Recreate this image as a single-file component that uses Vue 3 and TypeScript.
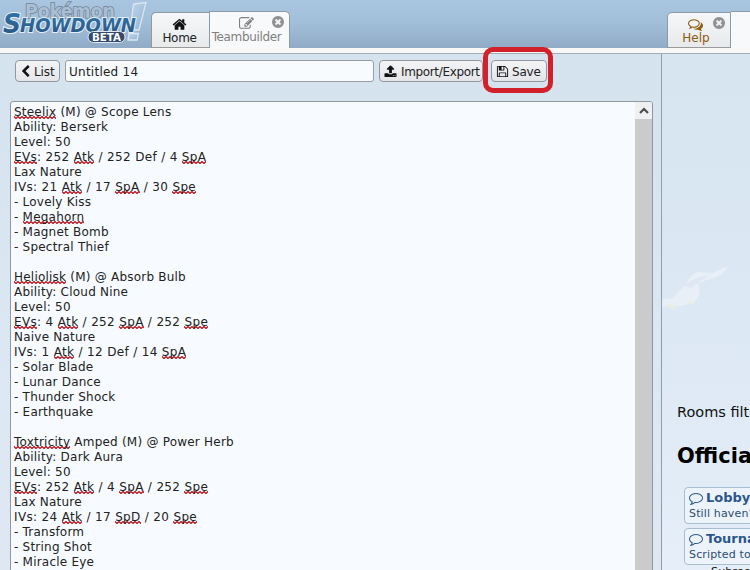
<script setup lang="ts">
const icons = {
  home: 'M1472 992v480q0 26-19 45t-45 19h-384v-384h-256v384h-384q-26 0-45-19t-19-45v-480q0-1 .5-3t.5-3l575-474 575 474q1 2 1 6zm223-69l-62 74q-8 9-21 11h-3q-13 0-21-7l-692-577-692 577q-12 8-24 7-13-2-21-11l-62-74q-8-10-7-23.5t11-21.5l719-599q32-26 76-26t76 26l244 204v-195q0-14 9-23t23-9h192q14 0 23 9t9 23v408l219 182q10 8 11 21.5t-7 23.5z',
  edit: 'M888 1184l116-116-152-152-116 116v56h96v96h56zm440-720q-16-16-33 1l-350 350q-17 17-1 33t33-1l350-350q17-17 1-33zm80 594v190q0 119-84.5 203.5t-203.5 84.5h-832q-119 0-203.5-84.5t-84.5-203.5v-832q0-119 84.5-203.5t203.5-84.5h832q63 0 117 25 15 7 18 23 3 17-9 29l-49 49q-14 14-32 8-23-6-45-6h-832q-66 0-113 47t-47 113v832q0 66 47 113t113 47h832q66 0 113-47t47-113v-126q0-13 9-22l64-64q15-15 35-7t20 29zm-96-738l288 288-672 672h-288v-288zm444 132l-92 92-288-288 92-92q28-28 68-28t68 28l152 152q28 28 28 68t-28 68z',
  close: 'M1277 1122q0-26-19-45l-181-181 181-181q19-19 19-45 0-27-19-46l-90-90q-19-19-46-19-26 0-45 19l-181 181-181-181q-19-19-45-19-27 0-46 19l-90 90q-19 19-19 46 0 26 19 45l181 181-181 181q-19 19-19 45 0 27 19 46l90 90q19 19 46 19 26 0 45-19l181-181 181 181q19 19 45 19 27 0 46-19l90-90q19-19 19-46zm387-226q0 209-103 385.5t-279.5 279.5-385.5 103-385.5-103-279.5-279.5-103-385.5 103-385.5 279.5-279.5 385.5-103 385.5 103 279.5 279.5 103 385.5z',
  upload: 'M1344 1472q0-26-19-45t-45-19-45 19-19 45 19 45 45 19 45-19 19-45zm256 0q0-26-19-45t-45-19-45 19-19 45 19 45 45 19 45-19 19-45zm128-224v320q0 40-28 68t-68 28h-1472q-40 0-68-28t-28-68v-320q0-40 28-68t68-28h427q21 56 70.5 92t110.5 36h256q61 0 110.5-36t70.5-92h427q40 0 68 28t28 68zm-325-648q-17 40-59 40h-256v448q0 26-19 45t-45 19h-256q-26 0-45-19t-19-45v-448h-256q-42 0-59-40-17-39 14-69l448-448q18-19 45-19t45 19l448 448q31 30 14 69z',
  save: 'M512 1536h768v-384h-768v384zm896 0h128v-896q0-14-10-38.5t-20-34.5l-281-281q-10-10-34-20t-39-10v416q0 40-28 68t-68 28h-576q-40 0-68-28t-28-68v-416h-128v1280h128v-416q0-40 28-68t68-28h832q40 0 68 28t28 68v416zm-384-928v-320q0-13-9.5-22.5t-22.5-9.5h-192q-13 0-22.5 9.5t-9.5 22.5v320q0 13 9.5 22.5t22.5 9.5h192q13 0 22.5-9.5t9.5-22.5zm640 32v928q0 40-28 68t-68 28h-1344q-40 0-68-28t-28-68v-1344q0-40 28-68t68-28h928q40 0 88 20t76 48l280 280q28 28 48 76t20 88z',
  comment: 'M896 384q-204 0-381.5 69.5t-282 187.5-104.5 255q0 112 71.5 213.5t201.5 175.5l87 50-27 96q-24 91-70 172 152-63 275-171l43-38 57 6q69 8 130 8 204 0 381.5-69.5t282-187.5 104.5-255-104.5-255-282-187.5-381.5-69.5zm896 512q0 174-120 321.5t-326 233-450 85.5q-70 0-145-8-198 175-460 242-49 14-114 22h-5q-15 0-27-10.5t-16-27.5v-1q-3-4-.5-12t2-10 4.5-9.5l6-9 7-8.5 8-9q7-8 31-34.5t34.5-38 31-39.5 32.5-51 27-59 26-76q-157-89-247.5-220t-90.5-281q0-174 120-321.5t326-233 450-85.5 450 85.5 326 233 120 321.5z',
  comments: 'M704 384q-153 0-286 52t-211.5 141-78.5 191q0 82 53 158t149 132l97 56-35 84q34-20 62-39l44-31 53 10q78 14 153 14 153 0 286-52t211.5-141 78.5-191-78.5-191-211.5-141-286-52zm0-128q191 0 353.5 68.5t256.5 186.5 94 257-94 257-256.5 186.5-353.5 68.5q-86 0-176-16-124 88-278 128-36 9-86 16h-3q-11 0-20.5-8t-11.5-21q-1-3-1-6.5t.5-6.5 2-6l2.5-5 3.5-5.5 4-5 4.5-5 4-4.5q5-6 23-25t26-29.5 22.5-29 25-38.5 20.5-44q-124-72-195-177t-71-224q0-139 94-257t256.5-186.5 353.5-68.5zm822 1169q10 24 20.5 44t25 38.5 22.5 29 26 29.5 23 25q1 1 4 4.5t4.5 5 4 5 3.5 5.5l2.5 5 2 6 .5 6.5-1 6.5q-3 14-13 22t-22 7q-50-7-86-16-154-40-278-128-90 16-176 16-271 0-472-132 58 4 88 4 161 0 309-45t264-129q125-92 192-212t67-254q0-77-23-152 129 71 204 178t75 230q0 120-71 224.5t-195 176.5z',
  back: 'M1427 301l-531 531 531 531q19 19 19 45t-19 45l-166 166q-19 19-45 19t-45-19l-742-742q-19-19-19-45t19-45l742-742q19-19 45-19t45 19l166 166q19 19 19 45t-19 45z',
}

const team = `Steelix (M) @ Scope Lens
Ability: Berserk
Level: 50
EVs: 252 Atk / 252 Def / 4 SpA
Lax Nature
IVs: 21 Atk / 17 SpA / 30 Spe
- Lovely Kiss
- Megahorn
- Magnet Bomb
- Spectral Thief

Heliolisk (M) @ Absorb Bulb
Ability: Cloud Nine
Level: 50
EVs: 4 Atk / 252 SpA / 252 Spe
Naive Nature
IVs: 1 Atk / 12 Def / 14 SpA
- Solar Blade
- Lunar Dance
- Thunder Shock
- Earthquake

Toxtricity Amped (M) @ Power Herb
Ability: Dark Aura
Level: 50
EVs: 252 Atk / 4 SpA / 252 Spe
Lax Nature
IVs: 24 Atk / 17 SpD / 20 Spe
- Transform
- String Shot
- Miracle Eye`

interface Part { text: string; bad: boolean }
interface Line { stats: boolean; parts: Part[] }

const unknown = /(\b(?:Steelix|EVs|Atk|SpA|SpD|Spe|Megahorn|Heliolisk|Toxtricity)\b)/
const lines: Line[] = team.split('\n').map((line) => ({
  stats: /^[EI]Vs/.test(line),
  parts: line.split(unknown).map((text, i) => ({ text, bad: i % 2 === 1 })).filter((p) => p.text !== ''),
}))

const rooms = [
  { name: 'Lobby', desc: 'Still haven’t decided' },
  { name: 'Tournaments', desc: 'Scripted tournaments' },
]
</script>

<template>
  <div class="page">
    <header class="header">
      <svg class="logo" width="150" height="48" viewBox="0 0 150 48">
        <defs>
          <linearGradient id="blue" x1="0" y1="0" x2="0" y2="1">
            <stop offset="0" stop-color="#2f76aa" /><stop offset="1" stop-color="#29527f" />
          </linearGradient>
          <linearGradient id="glass" x1="0" y1="0" x2="1" y2="1">
            <stop offset="0" stop-color="#c3d7ea" /><stop offset="1" stop-color="#8fb0cf" />
          </linearGradient>
        </defs>
        <path d="M133.500 4L146 2.500L139 30L130 30Z" fill="url(#glass)" stroke="#d9e6f2" stroke-width="1.300" />
        <path d="M129 33.500H138.500L137 40H128Z" fill="url(#glass)" stroke="#d9e6f2" stroke-width="1.300" />
        <text class="poke" x="25" y="17.500" textLength="90" lengthAdjust="spacingAndGlyphs">Pokémon</text>
        <g class="show" fill="url(#blue)">
          <text x="3" y="33" font-size="26" textLength="18" lengthAdjust="spacingAndGlyphs">S</text>
          <text x="20" y="32" font-size="19.500" textLength="116" lengthAdjust="spacingAndGlyphs">HOWDOWN</text>
        </g>
        <rect x="88" y="31.500" width="37" height="11" rx="5.500" fill="#34496b" stroke="#e0e9f3" />
        <text class="beta" x="92" y="41" textLength="29" lengthAdjust="spacingAndGlyphs">BETA</text>
      </svg>
      <nav class="tabs">
        <a class="tab home">
          <svg class="icon" width="15" height="15" viewBox="0 0 1792 1792"><path :d="icons.home" /></svg>
          <span>Home</span>
        </a>
        <a class="tab builder">
          <svg class="icon" width="15" height="15" viewBox="0 0 1792 1792"><path :d="icons.edit" /></svg>
          <span>Teambuilder</span>
          <svg class="close" width="14" height="14" viewBox="0 0 1792 1792"><path :d="icons.close" /></svg>
        </a>
      </nav>
      <nav class="tabs side">
        <a class="tab help">
          <svg class="icon" width="15" height="15" viewBox="0 0 1792 1792"><path :d="icons.comments" /></svg>
          <span>Help</span>
          <svg class="close" width="14" height="14" viewBox="0 0 1792 1792"><path :d="icons.close" /></svg>
        </a>
        <span class="tab blank"></span>
      </nav>
    </header>
    <div class="strip"></div>

    <main class="body">
      <section class="left">
        <div class="toolbar">
          <button class="btn list"><svg width="13" height="13" viewBox="0 0 1792 1792"><path :d="icons.back" /></svg><span>List</span></button>
          <div class="name">Untitled 14</div>
          <button class="btn import"><svg width="13" height="13" viewBox="0 0 1792 1792"><path :d="icons.upload" /></svg><span>Import/Export</span></button>
          <button class="btn save"><svg width="13" height="13" viewBox="0 0 1792 1792"><path :d="icons.save" /></svg><span>Save</span></button>
          <div class="mark"></div>
        </div>
        <div class="editor">
          <div class="text">
            <div v-for="(line, i) in lines" :key="i" class="line" :class="{ stats: line.stats }"><span v-for="(part, j) in line.parts" :key="j" :class="{ bad: part.bad }">{{ part.text }}</span></div>
          </div>
          <div class="scroll">
            <div class="arrow"><svg width="10" height="8" viewBox="0 0 10 8"><path d="M1 6L5 2L9 6" fill="none" stroke="#4d4d4d" stroke-width="2.200" /></svg></div>
          </div>
        </div>
      </section>

      <section class="right">
        <svg class="bird" width="90" height="60" viewBox="0 0 90 60">
          <path d="M0 43Q13 36 24 38L37 24Q43 13 50 11L65 12L80 5Q76 15 62 18L50 22Q54 31 48 39Q32 48 22 44L10 48L0 47Z" fill="#e9eff7" />
          <path d="M35 25Q46 16 62 14Q51 20 44 27Z" fill="#dfe8f2" />
          <path d="M20 44L27 47M41 40L46 43" stroke="#e9eee0" stroke-width="3" />
        </svg>
        <p class="filter">Rooms filter</p>
        <h2>Official chat rooms</h2>
        <a v-for="room in rooms" :key="room.name" class="room">
          <strong><svg width="14" height="14" viewBox="0 0 1792 1792"><path :d="icons.comment" /></svg>{{ room.name }}</strong>
          <small>{{ room.desc }}</small>
        </a>
        <div class="sub"><i></i>Subrooms:</div>
      </section>
    </main>
  </div>
</template>

<style>
body { overflow: hidden; }
</style>

<style scoped>
* { box-sizing: border-box; }
.page {
  width: 750px; height: 570px; overflow: hidden; display: flex; flex-direction: column;
  font-family: Verdana, "DejaVu Sans", sans-serif; font-size: 12px; color: #222;
}
.header {
  height: 48px; flex: none; display: flex; align-items: flex-end;
  background: linear-gradient(#a9c5e0, #a2bfda 45%, #91abc6);
}
.logo { flex: none; display: block; font-family: "DejaVu Sans", sans-serif; }
.poke { font-size: 19px; font-weight: bold; fill: #abbfd2; stroke: #71859b; stroke-width: 1.6px; paint-order: stroke; }
.show text { font-weight: bold; font-style: italic; stroke: #e5edf5; stroke-width: 2.2px; paint-order: stroke; }
.beta { font-size: 10px; font-weight: bold; fill: #fff; }
.tabs { display: flex; align-items: flex-end; }
.side { margin-left: auto; }
.tab {
  position: relative; height: 36px; display: flex; flex-direction: column; align-items: center;
  padding-top: 4px; border: 1px solid #8c9baa; border-bottom-color: #999;
  background: linear-gradient(#f6f7f8, #e7e9eb); line-height: 14px;
}
.tab .icon { flex: none; fill: currentColor; margin-bottom: -1px; }
.home { width: 58px; margin-left: 1px; padding-right: 2px; border-radius: 5px 0 0 0; border-right: 0; letter-spacing: -0.3px; }
.home .icon { fill: #111; }
.builder { width: 81px; height: 37px; border-radius: 0 5px 0 0; background: #f8f9fa; border-bottom: 0; color: #808080; padding-right: 6px; letter-spacing: -0.35px; }
.help { width: 64px; border-radius: 5px 0 0 0; color: #8c5c0c; padding-right: 6px; }
.help .icon { transform: translateX(-1px); }
.blank { width: 19px; height: 37px; background: #f8f9fa; border-width: 1px 0 0; }
.close { position: absolute; top: 3px; right: 4px; fill: #929292; }
.strip { height: 6px; flex: none; background: #f8f8f9; border-bottom: 1px solid #a4acb4; }
.body {
  flex: 1; min-height: 0; display: flex;
  background: linear-gradient(100deg, #d2e1ed 0, #d9e6f1 30%, #d8e6f1 100%);
}
.left {
  width: 662px; flex: none; border-right: 1px solid #909dab; padding: 6px 8px 0 10px;
  display: flex; flex-direction: column; background: linear-gradient(#d5e3ef, #dbe8f3 60%, #dfe7f3);
}
.toolbar { position: relative; height: 22px; flex: none; display: flex; padding-left: 5px; }
.btn {
  height: 22px; padding: 1px 4px 0; border: 1px solid #92979f; border-radius: 4px; color: #222;
  background: linear-gradient(#f3f4f6, #e3e5e9); display: flex; align-items: center; gap: 4px; font: inherit; white-space: nowrap;
}
.btn svg { flex: none; fill: #111; }
.list { width: 45px; margin-right: 5px; padding-left: 3px; gap: 2px; letter-spacing: -0.1px; }
.name { width: 309px; height: 22px; margin-right: 5px; padding: 1px 3px 0; border: 1px solid #9b9fa4; border-radius: 3px; background: #f8fbfe; line-height: 20px; letter-spacing: 0.25px; }
.import { width: 104px; padding-left: 4px; letter-spacing: -0.35px; }
.save { width: 56px; margin-left: 8px; gap: 3px; letter-spacing: -0.2px; }
.mark { position: absolute; left: 473px; top: -13px; width: 70px; height: 46px; border: 5px solid #d2212a; border-radius: 10px; }
.editor {
  flex: 1; min-height: 0; margin: 19px 0 -1px; width: 643px; display: flex;
  border: 1px solid #8f979f; border-radius: 3px 3px 0 0; background: #f7fbff; overflow: hidden;
}
.text { flex: 1; padding: 3px 3px 0; color: #222; }
.line { height: 15px; line-height: 15px; white-space: pre; letter-spacing: 0.22px; }
.line.stats { letter-spacing: 0.34px; }
.bad {
  display: inline-block; height: 15px;
  background: url("data:image/svg+xml,%3Csvg xmlns='http://www.w3.org/2000/svg' width='4' height='3'%3E%3Cpath d='M-1 1.500L0 .5L2 2.500L4 .5L5 1.500' fill='none' stroke='%23b8141c' stroke-width='1.250'/%3E%3C/svg%3E") repeat-x 0 11px;
}
.scroll { width: 17px; background: #cbcbcb; }
.arrow { height: 17px; background: #f0f0f0; display: flex; align-items: center; justify-content: center; }
.right { position: relative; width: 88px; flex: none; overflow: hidden; padding: 348px 0 0 15px; background: linear-gradient(#d6e5f0, #dce8f4 50%, #e5eef9); }
.bird { position: absolute; left: -14px; top: 207px; }
.filter { margin: 0; font-size: 14.5px; line-height: 20px; color: #111; white-space: nowrap; }
h2 { margin: 20px 0 19px; font-size: 21px; line-height: 28px; height: 26px; color: #000; white-space: nowrap; }
.room {
  display: block; width: 180px; height: 37px; margin: 0 0 4px 7px; padding: 2px 4px; border: 1px solid #a7bdd4;
  border-radius: 4px; background: #edf3fa; color: #2b4d73; white-space: nowrap;
}
.room strong { display: flex; align-items: center; gap: 3px; height: 15px; font-size: 13px; color: #29568e; }
.room svg { fill: #29568e; }
.room small { display: block; font-size: 11px; line-height: 18px; letter-spacing: 0.15px; }
.sub { margin: -4px 0 0 14px; font-size: 11px; line-height: 14px; white-space: nowrap; display: flex; letter-spacing: 0.2px; color: #111; }
.sub i { width: 7px; height: 7px; margin: 4px 14px 0 6px; border-top: 1px solid #222; }
</style>
